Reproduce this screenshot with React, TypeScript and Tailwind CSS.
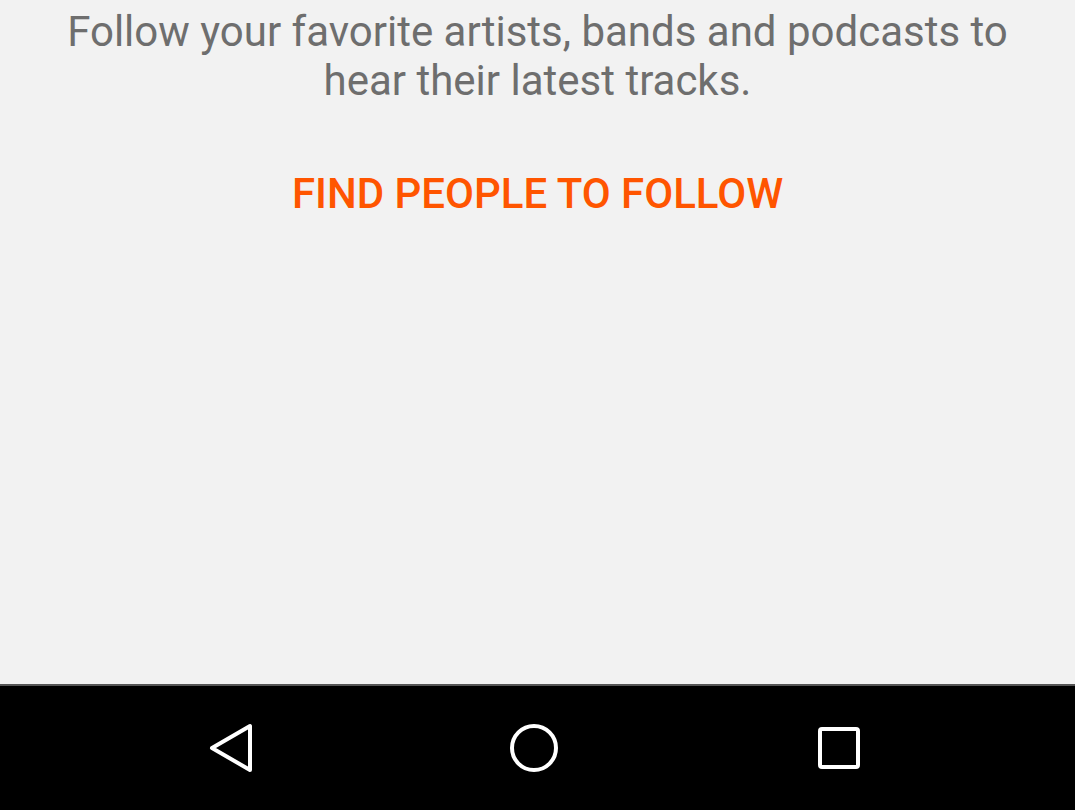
import React from "react";

export default function App() {
  return (
    <div className="w-[1075px] h-[810px] flex flex-col bg-[#f2f2f2] overflow-hidden" style={{ fontFamily: "Roboto, 'Liberation Sans', sans-serif" }}>
      <div className="flex-1 flex flex-col items-center pt-[7px]">
        <p className="text-center text-[42px] leading-[49px] text-[#6e6e6e] w-[1000px]">
          Follow your favorite artists, bands and podcasts to hear their latest tracks.
        </p>
        <div className="mt-[64px] text-[42px] leading-[50px] font-medium text-[#ff5500]">FIND PEOPLE TO FOLLOW</div>
      </div>
      <div className="h-[126px] bg-black border-t-2 border-[#555] flex items-center pl-[208px]">
        <div className="flex items-center">
          <svg width="46" height="50" viewBox="0 0 46 50" fill="none" stroke="white" strokeWidth="4" strokeLinejoin="round">
            <path d="M42 3 L42 47 L4 25 Z" />
          </svg>
          <svg className="ml-[255px]" width="50" height="50" viewBox="0 0 50 50" fill="none" stroke="white" strokeWidth="4">
            <circle cx="25" cy="25" r="22" />
          </svg>
          <svg className="ml-[259px]" width="42" height="42" viewBox="0 0 42 42" fill="none" stroke="white" strokeWidth="4">
            <rect x="2" y="2" width="38" height="38" rx="2" />
          </svg>
        </div>
      </div>
    </div>
  );
}
